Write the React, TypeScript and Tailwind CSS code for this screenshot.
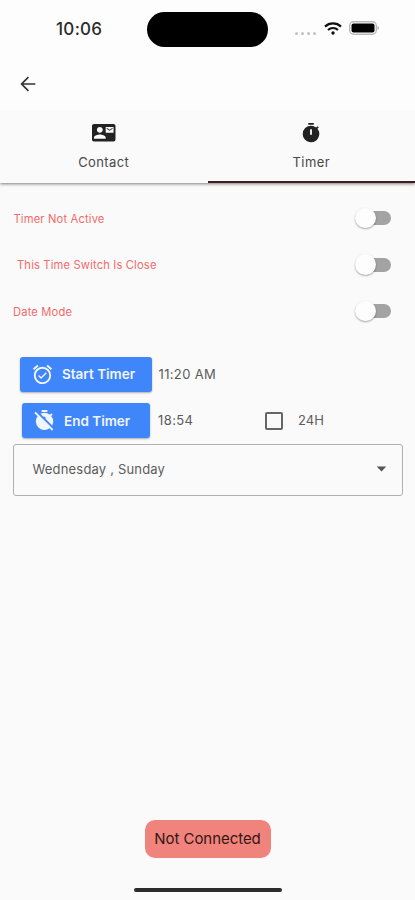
import type { ReactNode } from "react";
import { MdAlarmOn, MdArrowDropDown, MdContactMail, MdTimer, MdTimerOff } from "react-icons/md";

const switches = [
  { label: "Timer Not Active", indent: "ml-[0.5px]" },
  { label: "This Time Switch Is Close", indent: "ml-[4px]" },
  { label: "Date Mode", indent: "ml-0" },
];

export default function App() {
  return (
    <div className="flex h-[900px] w-[415px] flex-col overflow-hidden bg-[#fafafa] font-['Inter',sans-serif] text-[#5c5c5c]">
      <header className="relative z-20 h-[110px] shrink-0 bg-[#fdfdfd]">
        <StatusBar />
        <button className="ml-[19px] mt-[17px] block" aria-label="Back">
          <BackIcon />
        </button>
      </header>

      <nav className="relative z-10 grid h-[73px] shrink-0 grid-cols-2 bg-[#fafafa] shadow-[0_1px_3px_rgba(0,0,0,0.5)]">
        <Tab label="Contact" icon={<MdContactMail className="size-[23.5px]" />} />
        <Tab label="Timer" icon={<MdTimer className="size-[22px]" />} active />
      </nav>

      <main className="flex flex-1 flex-col pt-[12px]">
        {switches.map((item) => (
          <div key={item.label} className="flex h-[46.5px] items-center justify-between pl-[13px] pr-[24px]">
            <span className={`mt-[2px] whitespace-nowrap text-[11.2px] tracking-[0.15px] text-[#f36b6b] ${item.indent}`}>
              {item.label}
            </span>
            <Switch />
          </div>
        ))}

        <div className="mt-[16.5px] flex h-[46.5px] items-center pl-[19.5px]">
          <TimerButton label="Start Timer" className="w-[132px]" icon={<MdAlarmOn className="size-[23px]" />} />
          <span className="ml-[7px] text-[13px] tracking-[0.35px]">11:20 AM</span>
        </div>
        <div className="flex h-[46.5px] items-center pl-[21.5px]">
          <TimerButton label="End Timer" className="w-[128px]" icon={<MdTimerOff className="size-[23px]" />} />
          <span className="ml-[8.5px] w-[107px] text-[13px] tracking-[0.4px]">18:54</span>
          <span className="size-[18px] rounded-[2px] border-2 border-[#666]" />
          <span className="ml-[15px] text-[13px] tracking-[0.1px]">24H</span>
        </div>

        <div className="mx-[12.5px] flex h-[52px] items-center justify-between rounded-[3px] border border-[#b0b0b0] pl-[19px] pr-[9px]">
          <span className="text-[13px] tracking-[0.18px]">Wednesday , Sunday</span>
          <MdArrowDropDown className="-mt-[3px] size-[23px] text-[#555]" />
        </div>

        <div className="mt-auto flex flex-col items-center">
          <div className="flex h-[38px] w-[126px] items-center justify-center rounded-[10px] bg-[#f0837b] text-[15px] tracking-[-0.05px] text-[#351615]">
            Not Connected
          </div>
          <div className="mb-[8px] mt-[30px] h-1 w-[148px] rounded-full bg-[#2b2b2b]" />
        </div>
      </main>
    </div>
  );
}

function StatusBar() {
  return (
    <div className="flex h-[58px] items-center">
      <span className="ml-[56px] mt-[2px] w-[91px] text-[17px] font-medium tracking-[0.3px] text-[#2b2b2b]">10:06</span>
      <span className="h-[35px] w-[121px] rounded-full bg-black" />
      <span className="ml-[27px] mt-[8px] flex gap-[3px]">
        {[0, 1, 2, 3].map((dot) => (
          <span key={dot} className="size-[3px] rounded-full bg-[#c2c2c2]" />
        ))}
      </span>
      <svg className="-mt-[2px] ml-[8px] h-[13px] w-[18px]" viewBox="0 0 18 13" fill="none" stroke="#111" strokeWidth="2.2">
        <path d="M1 4.6C5.5.4 12.5.4 17 4.6" />
        <path d="M4 8C6.8 5.3 11.2 5.3 14 8" />
        <circle cx="9" cy="11" r="1.7" fill="#111" stroke="none" />
      </svg>
      <svg className="-mt-[2px] ml-[7px] h-[14px] w-[31px]" viewBox="0 0 31 14">
        <rect x=".7" y=".7" width="26.6" height="12.6" rx="4" fill="#fdfdfd" stroke="#b9b9b9" strokeWidth="1.4" />
        <rect x="2.5" y="2.5" width="23" height="9" rx="2" fill="#000" />
        <path d="M28.5 4.8c2 .6 2 3.8 0 4.4z" fill="#b9b9b9" />
      </svg>
    </div>
  );
}

function BackIcon() {
  return (
    <svg className="size-[18px]" viewBox="0 0 18 18" fill="none" stroke="#333" strokeWidth="1.7">
      <path d="M16.3 9H3M9.4 2.2 2.6 9l6.800 6.800" />
    </svg>
  );
}

function Tab({ label, icon, active }: { label: string; icon: ReactNode; active?: boolean }) {
  return (
    <div
      className={`flex flex-col items-center border-b-2 pt-[11px] ${active ? "border-[#431d1d]" : "border-transparent"}`}
    >
      <span className="flex h-6 items-center text-[#222]">{icon}</span>
      <span className="mt-[7px] text-[13px] leading-5 tracking-[0.4px] text-[#484848]">{label}</span>
    </div>
  );
}

function Switch() {
  return (
    <span className="relative flex h-[21px] w-[36px] items-center">
      <span className="ml-[5px] h-[14px] w-[31px] rounded-full bg-[#a3a3a3]" />
      <span className="absolute left-0 top-0 size-[20.5px] rounded-full bg-[#fdfdfd] shadow-[0_1px_2px_rgba(0,0,0,0.35)]" />
    </span>
  );
}

function TimerButton({ label, icon, className }: { label: string; icon: ReactNode; className: string }) {
  return (
    <button
      className={`flex h-[35px] items-center gap-[8px] rounded-[3px] bg-[#4086fb] pl-[11.5px] text-[13.5px] font-semibold text-[#f0f5ff] shadow-[0_1px_2px_rgba(0,0,0,0.3)] ${className}`}
    >
      {icon}
      {label}
    </button>
  );
}
